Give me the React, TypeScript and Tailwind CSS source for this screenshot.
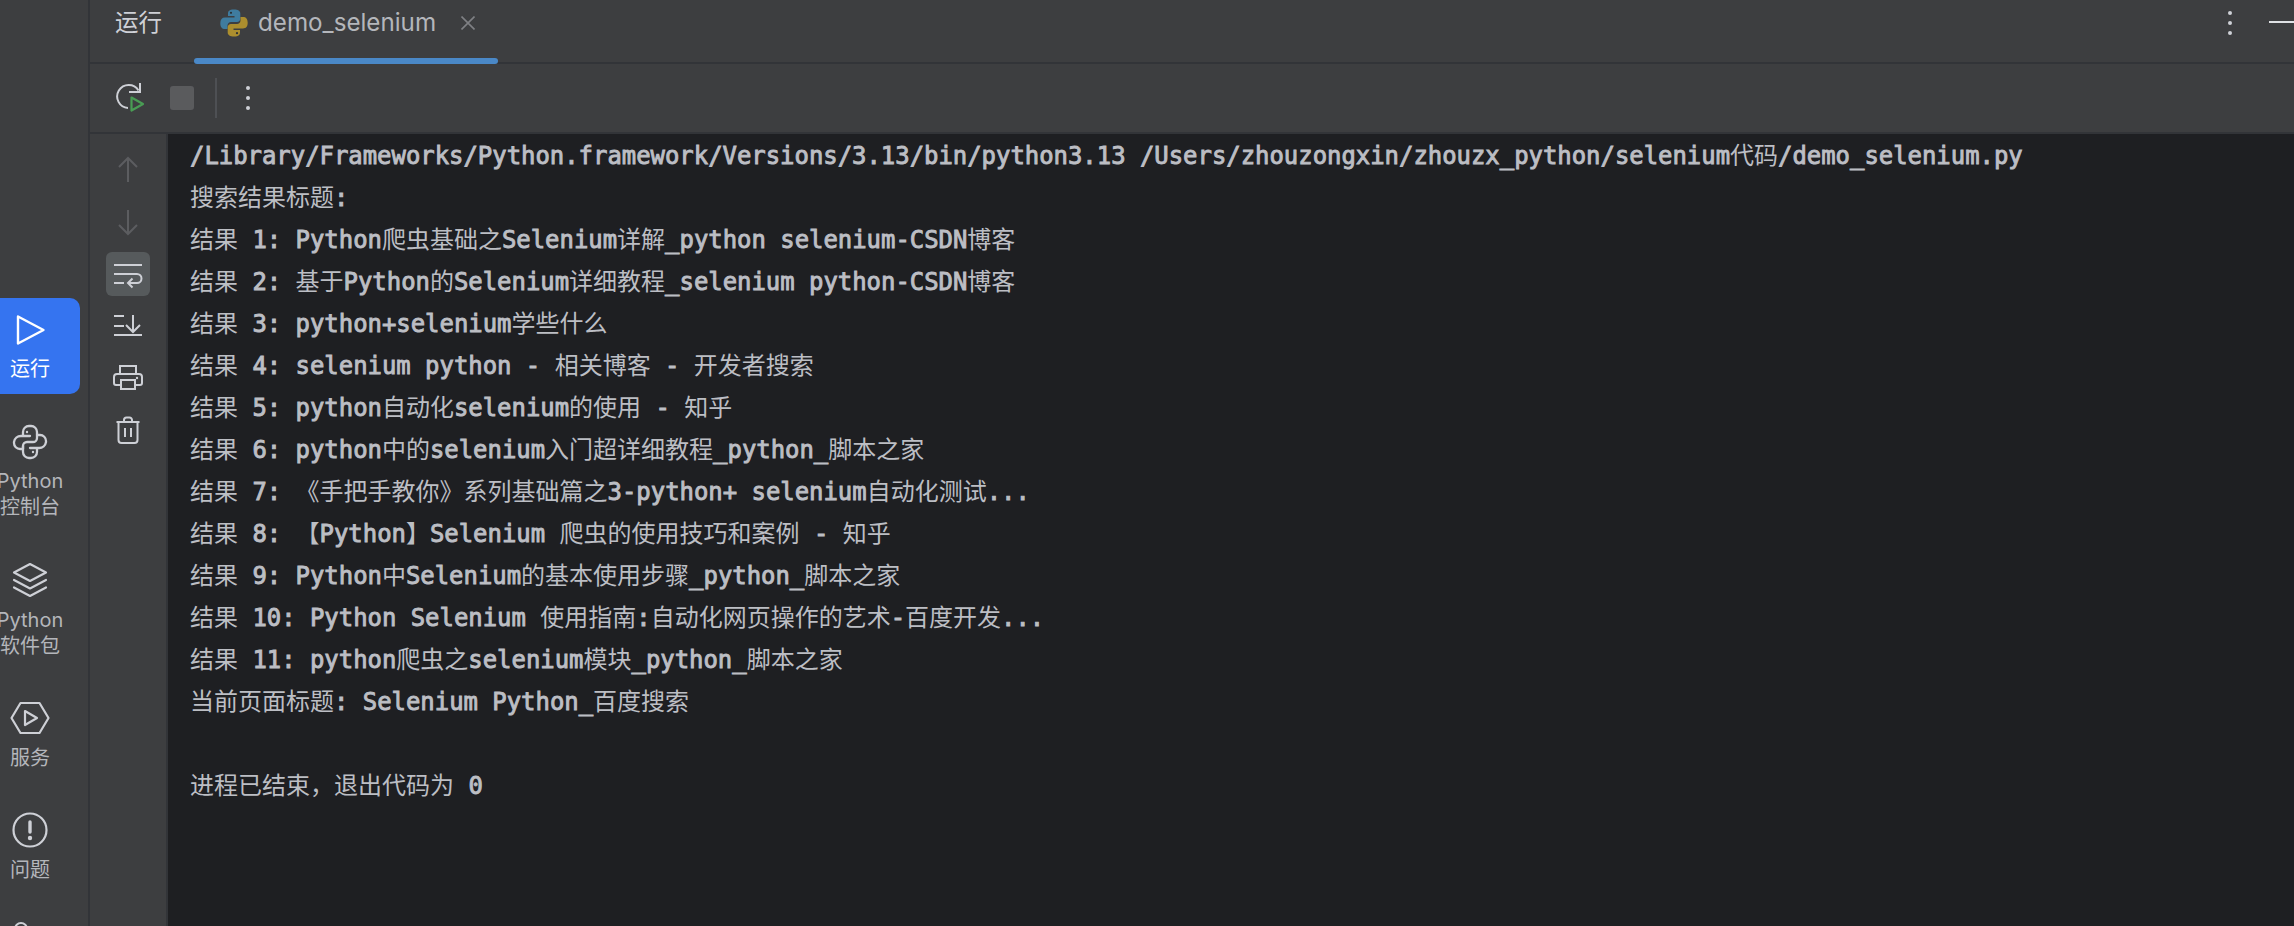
import React from 'react';
import { Fragment } from 'react';

const lines = [
  '/Library/Frameworks/Python.framework/Versions/3.13/bin/python3.13 /Users/zhouzongxin/zhouzx_python/selenium代码/demo_selenium.py',
  '搜索结果标题:',
  '结果 1: Python爬虫基础之Selenium详解_python selenium-CSDN博客',
  '结果 2: 基于Python的Selenium详细教程_selenium python-CSDN博客',
  '结果 3: python+selenium学些什么',
  '结果 4: selenium python - 相关博客 - 开发者搜索',
  '结果 5: python自动化selenium的使用 - 知乎',
  '结果 6: python中的selenium入门超详细教程_python_脚本之家',
  '结果 7: 《手把手教你》系列基础篇之3-python+ selenium自动化测试...',
  '结果 8: 【Python】Selenium 爬虫的使用技巧和案例 - 知乎',
  '结果 9: Python中Selenium的基本使用步骤_python_脚本之家',
  '结果 10: Python Selenium 使用指南:自动化网页操作的艺术-百度开发...',
  '结果 11: python爬虫之selenium模块_python_脚本之家',
  '当前页面标题: Selenium Python_百度搜索',
  '',
  '进程已结束，退出代码为 0',
];

// latin runs are heavier than the CJK ones in the console font
const ConsoleLine = ({ text }: { text: string }) => {
  const runs = text.match(/[\x00-\x7f]+|[^\x00-\x7f]+/g) || [];
  return (
    <div className="h-[42px] leading-[40px] whitespace-pre">
      {runs.map((run, i) =>
        /^[\x00-\x7f]/.test(run) ? (
          <span key={i} className="font-['DejaVu_Sans_Mono',monospace] text-[23.92px] [-webkit-text-stroke:0.9px_#bcbec4]">{run}</span>
        ) : (
          <span key={i} className="text-[24px]">{run}</span>
        )
      )}
    </div>
  );
};

const RunIcon = () => (
  <svg width="32" height="32" viewBox="0 0 32 32" fill="none" stroke="currentColor" strokeWidth="2.4" strokeLinejoin="round">
    <path d="M4 2.5L29.5 16L4 29.5Z" />
  </svg>
);

const PythonIcon = () => (
  <svg width="36" height="36" viewBox="0 0 36 36" fill="none" stroke="currentColor" strokeWidth="2.3" strokeLinecap="round" strokeLinejoin="round">
    <path d="M11 12V8a6 6 0 0 1 6-6h2a6 6 0 0 1 6 6v6a4 4 0 0 1-4 4h-6a4 4 0 0 0-4 4v3H8a6 6 0 0 1-6-6v-1a7 7 0 0 1 7-6h9" />
    <path d="M25 24v4a6 6 0 0 1-6 6h-2a6 6 0 0 1-6-6v-6M25 11h3a6 6 0 0 1 6 6v1a7 7 0 0 1-7 6h-9" />
    <circle cx="15" cy="8" r="1.2" fill="currentColor" stroke="none" />
    <circle cx="21" cy="28" r="1.2" fill="currentColor" stroke="none" />
  </svg>
);

const LayersIcon = () => (
  <svg width="36" height="36" viewBox="0 0 36 36" fill="none" stroke="currentColor" strokeWidth="2.2" strokeLinecap="round" strokeLinejoin="round">
    <path d="M18 2L34 10.5L18 19L2 10.5Z" />
    <path d="M2 18L18 26.5L34 18" />
    <path d="M2 25.5L18 34L34 25.5" />
  </svg>
);

const ServiceIcon = () => (
  <svg width="40" height="34" viewBox="0 0 40 34" fill="none" stroke="currentColor" strokeWidth="2.2" strokeLinejoin="round">
    <path d="M10.5 2H29.5L38.5 17L29.5 32H10.5L1.5 17Z" />
    <path d="M15 10L27 17L15 24Z" />
  </svg>
);

const AlertIcon = () => (
  <svg width="36" height="36" viewBox="0 0 36 36" fill="none" stroke="currentColor" strokeWidth="2.2">
    <circle cx="18" cy="18" r="16.5" />
    <path d="M18 10V20" strokeWidth="3.4" strokeLinecap="round" />
    <circle cx="18" cy="26" r="2.2" fill="currentColor" stroke="none" />
  </svg>
);

const sideItems = [
  { icon: RunIcon, label: ['运行'], active: true, gap: 'mt-[10px]' },
  { icon: PythonIcon, label: ['Python', '控制台'], gap: 'mt-[10px] pb-[12px]' },
  { icon: LayersIcon, label: ['Python', '软件包'], gap: 'mt-[11px] pb-[11px]' },
  { icon: ServiceIcon, label: ['服务'], gap: 'mt-[11px] pb-[11px]' },
  { icon: AlertIcon, label: ['问题'], gap: 'mt-[11px] pb-[11px]' },
];

const SideBar = () => (
  <aside className="w-[90px] shrink-0 border-r-2 border-[#323438] pt-[298px] flex flex-col gap-4 overflow-hidden">
    {sideItems.map((item, i) => (
      <div
        key={i}
        className={
          item.active
            ? 'w-[80px] h-[96px] shrink-0 pr-5 pt-4 rounded-r-[10px] bg-[#3574f0] text-white'
            : 'w-[80px] shrink-0 pr-5 pt-4 text-[#ced0d6]'
        }
      >
        <div className="flex flex-col items-center">
          <div className="h-8 flex items-center justify-center"><item.icon /></div>
          <div className={`${item.gap} flex flex-col items-center text-[20px] leading-[26px] whitespace-nowrap ${item.active ? 'text-white' : 'text-[#b4b6bb]'}`}>
            {item.label.map(l => (
              <Fragment key={l}><span>{l}</span></Fragment>
            ))}
          </div>
        </div>
      </div>
    ))}
    <div className="w-[14px] h-[14px] ml-[14px] mt-[12px] rounded-full border-2 border-[#ced0d6] shrink-0" />
  </aside>
);

const PythonLogo = () => (
  <svg width="28" height="28" viewBox="0 0 28 28">
    <g>
      <path fill="#3f7c9f" d="M14 0.5C9 0.5 8 2.5 8 4.5V7H14.5V8.5H5C2 8.5 0.3 10.5 0.3 14.2C0.3 18 2 20 5 20H7.5V16.5C7.5 14.5 9.2 13 11 13H17C19 13 20.3 11.5 20.3 9.7V4.5C20.3 2 18 0.5 14 0.5Z" />
      <circle cx="11" cy="3.8" r="1.1" fill="#2b3034" />
    </g>
    <g transform="rotate(180 14 14)">
      <path fill="#ac8e2e" d="M14 0.5C9 0.5 8 2.5 8 4.5V7H14.5V8.5H5C2 8.5 0.3 10.5 0.3 14.2C0.3 18 2 20 5 20H7.5V16.5C7.5 14.5 9.2 13 11 13H17C19 13 20.3 11.5 20.3 9.7V4.5C20.3 2 18 0.5 14 0.5Z" />
      <circle cx="11" cy="3.8" r="1.1" fill="#2b3034" />
    </g>
  </svg>
);

const TabBar = () => (
  <div className="relative h-16 shrink-0 border-b-2 border-[#323438] flex items-center pb-[16px] pl-[25px] text-[#ced0d6]">
    <span className="text-[23.5px] w-[105px]">运行</span>
    <PythonLogo />
    <span className="ml-[10px] font-['Inter',sans-serif] text-[24.2px] text-[#b4b6bb]">demo_selenium</span>
    <svg className="ml-[25px]" width="14" height="14" viewBox="0 0 14 14" stroke="#7f8084" strokeWidth="1.6">
      <path d="M0.5 0.5L13.5 13.5M13.5 0.5L0.5 13.5" />
    </svg>
    <div className="absolute left-[104px] bottom-[-2px] w-[304px] h-[6px] rounded-full bg-[#4a88c7]" />
    <div className="ml-auto mr-[62px] flex flex-col gap-[6px]">
      <i className="block w-1 h-1 rounded-full bg-[#ced0d6]" />
      <i className="block w-1 h-1 rounded-full bg-[#ced0d6]" />
      <i className="block w-1 h-1 rounded-full bg-[#ced0d6]" />
    </div>
    <div className="absolute right-0 top-[21px] w-[25px] h-[2px] bg-[#dfe1e5]" />
  </div>
);

const ToolBar = () => (
  <div className="h-[70px] shrink-0 border-b-2 border-[#323438] flex items-center pl-[25px]">
    <svg width="30" height="32" viewBox="0 0 30 32" fill="none">
      <path d="M23.5 8.5A11.5 11.5 0 1 0 13 26" stroke="#ced0d6" strokeWidth="2" />
      <path d="M25 1V10H14" stroke="#ced0d6" strokeWidth="2" />
      <path d="M16.5 15.5L28 22L16.5 28.5Z" stroke="#499c54" strokeWidth="2.2" strokeLinejoin="round" />
    </svg>
    <div className="ml-[25px] w-6 h-6 rounded-[3px] bg-[#5a5b5d]" />
    <div className="ml-[21px] w-[2px] h-10 bg-[#4e5054]" />
    <div className="ml-[29px] flex flex-col gap-[6px]">
      <i className="block w-1 h-1 rounded-full bg-[#ced0d6]" />
      <i className="block w-1 h-1 rounded-full bg-[#ced0d6]" />
      <i className="block w-1 h-1 rounded-full bg-[#ced0d6]" />
    </div>
  </div>
);

const gutterIcons = [
  { d: 'M22 10V34M13 19L22 10L31 19', color: '#5c5d60' },
  { d: 'M22 10V34M13 25L22 34L31 25', color: '#5c5d60' },
  { d: 'M8 13H36M8 31H18M8 22H31A4.5 4.5 0 0 1 31 31H22M26.5 26.5L22 31L26.5 35.5', color: '#ced0d6', active: true },
  { d: 'M8 12H18M8 22H18M8 31H36M27 11V28M20 21L27 28L34 21', color: '#ced0d6' },
  { d: 'M14 18V10H30V18M14 29H10A2 2 0 0 1 8 27V21A3 3 0 0 1 11 18H33A3 3 0 0 1 36 21V27A2 2 0 0 1 34 29H30M15 24H29V33H15Z', color: '#ced0d6', dot: true },
  { d: 'M10.5 14H33.5M18 14V12A2.5 2.5 0 0 1 20.5 9.5H23.5A2.5 2.5 0 0 1 26 12V14M12.5 14V32A3 3 0 0 0 15.5 35H28.5A3 3 0 0 0 31.5 32V14M19 20V29M25 20V29', color: '#ced0d6' },
];

const Gutter = () => (
  <div className="w-[78px] shrink-0 border-r-2 border-[#323438] pt-[14px] pl-4 flex flex-col gap-2">
    {gutterIcons.map((g, i) => (
      <div key={i} className={g.active ? 'w-11 h-11 rounded-[6px] bg-[#565a5c]' : 'w-11 h-11'}>
        <svg width="44" height="44" viewBox="0 0 44 44" fill="none" stroke={g.color} strokeWidth="2">
          <path d={g.d} />
          {g.dot && <circle cx="31" cy="22" r="1.2" fill={g.color} stroke="none" />}
        </svg>
      </div>
    ))}
  </div>
);

export default function App() {
  return (
    <div className="w-[2294px] h-[926px] flex overflow-hidden bg-[#3d3e40] font-['Inter','Noto_Sans_CJK_SC',sans-serif]">
      <SideBar />
      <div className="flex-1 min-w-0 flex flex-col">
        <TabBar />
        <ToolBar />
        <div className="flex-1 flex min-h-0">
          <Gutter />
          <div className="flex-1 bg-[#1e1f22] pl-[22px] text-[#bcbec4] font-['Noto_Sans_CJK_SC',sans-serif]">
            {lines.map((line, i) => (
              <ConsoleLine key={i} text={line} />
            ))}
          </div>
        </div>
      </div>
    </div>
  );
}
